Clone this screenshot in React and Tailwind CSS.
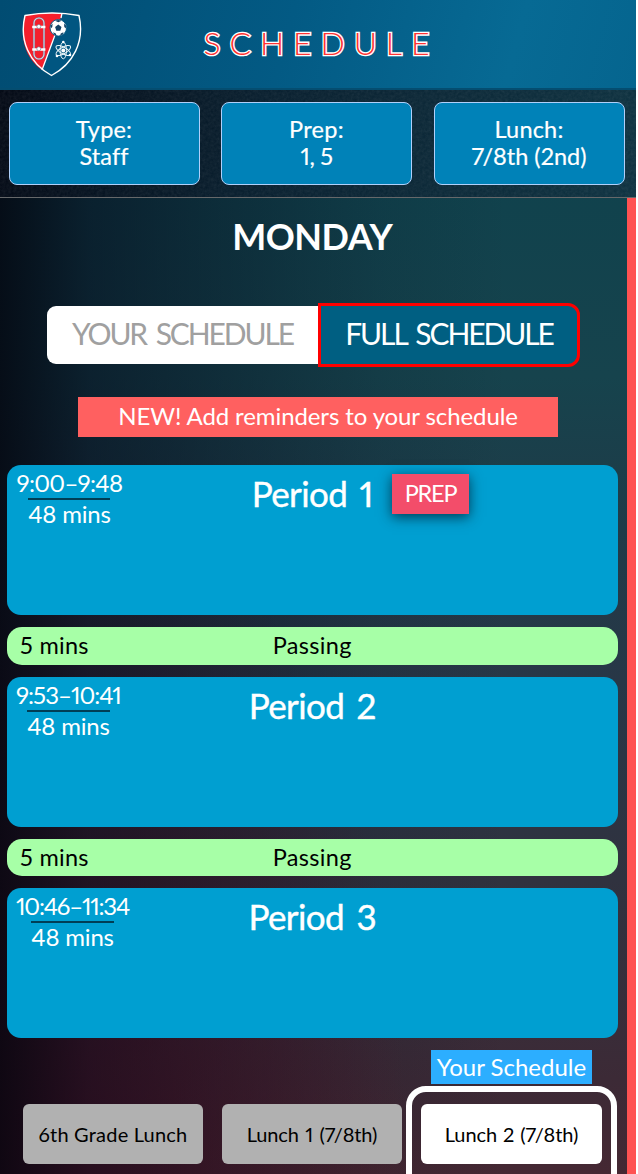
import React from "react";

function Crest() {
  return (
    <svg viewBox="0 0 64 68" className="h-[68px] w-16" fill="none">
      <path d="M5 5.500Q32 .5 59 5.500C65 32 53 54 31.500 65.500C9 53 -1 30 5 5.500Z" fill="#015681" />
      <path d="M5 5.500Q22 2.500 42 3.200L40 10L22 60C6 49 -1 29 5 5.500Z" fill="#f51f2c" />
      <path d="M42 3.200L41 8M35 25L22 60" stroke="#fff" strokeWidth="1.300" />
      <path d="M5 5.500Q32 .5 59 5.500C65 32 53 54 31.500 65.500C9 53 -1 30 5 5.500Z" stroke="#fff" strokeWidth="1.400" />
      <rect x="14" y="8" width="10" height="41" rx="5" stroke="#8a5c78" strokeWidth="2.200" />
      <rect x="14" y="8" width="10" height="41" rx="5" stroke="#d4dce8" strokeWidth="1.100" />
      <path d="M12.200 17h13.200M12.200 39.500h13.200" stroke="#fff" strokeWidth="2.300" />
      <circle cx="18.800" cy="16.500" r="2" fill="#fff" stroke="#60708c" strokeWidth=".6" />
      <circle cx="18.800" cy="38.800" r="2" fill="#fff" stroke="#60708c" strokeWidth=".6" />
      <circle cx="38.300" cy="17.800" r="8.300" fill="#fff" stroke="#015681" strokeWidth=".9" />
      <path d="M38.300 14.500l3.200 2.400-1.200 3.800h-4l-1.200-3.800ZM35 10.700l3.300 1.500 3.300-1.500-3.300-.8ZM44 13.500l.3 3.500 1.600 1.500.1-3ZM43.500 22.300l-2.700 1.300-.7 1.800 2.500-.9ZM33.100 22.300l2.700 1.300.7 1.800-2.500-.9ZM32.600 13.500l-.3 3.500-1.600 1.500v-3Z" fill="#124367" />
      <g stroke="#e7f3f7" strokeWidth="1">
        <ellipse cx="43.300" cy="40.500" rx="3.200" ry="8.300" />
        <ellipse cx="43.300" cy="40.500" rx="3.200" ry="8.300" transform="rotate(60 43.300 40.500)" />
        <ellipse cx="43.300" cy="40.500" rx="3.200" ry="8.300" transform="rotate(120 43.300 40.500)" />
      </g>
      <g fill="#fff"><circle cx="43.300" cy="40.500" r="2" /><circle cx="43.300" cy="32" r="1.300" /><circle cx="37" cy="46" r="1.300" /><circle cx="50" cy="45" r="1.300" /></g>
    </svg>
  );
}

function Grain() {
  return (
    <svg className="pointer-events-none absolute inset-0 h-full w-full opacity-10">
      <filter id="grain"><feTurbulence type="fractalNoise" baseFrequency="0.350" numOctaves="3" /><feColorMatrix type="saturate" values="0" /></filter>
      <rect width="100%" height="100%" filter="url(#grain)" />
    </svg>
  );
}

function Setting({ label, value, labelClass, valueClass }) {
  return (
    <button className="relative flex h-[83px] w-[191px] flex-col items-center justify-center rounded-lg border border-[#b0d0fa] bg-[#0082b8] pb-[2px] text-[23.500px] leading-[27px] text-white [-webkit-text-stroke:0.200px_white]">
      <span className={labelClass}>{label}</span>
      <span className={valueClass}>{value}</span>
    </button>
  );
}

function Period({ time, name, timeClass, detailClass, ruleClass, prep }) {
  return (
    <section className="relative flex h-[150px] justify-center rounded-[14px] bg-[#009fd1] text-white">
      <div className={"absolute top-1 flex flex-col items-center text-2xl leading-[27px] whitespace-nowrap " + detailClass}>
        <span className={timeClass}>{time}</span>
        <span className={"mt-[2px] h-[2px] bg-[#003e55] " + ruleClass} />
        <span className="tracking-[-0.200px]">48 mins</span>
      </div>
      <h2 className="mt-2 h-10 whitespace-nowrap text-[35px] leading-10 tracking-[-0.600px] [word-spacing:4px] [-webkit-text-stroke:0.400px_white]">{name}</h2>
      {prep && (
        <span className="absolute left-[385px] top-[9px] flex h-10 w-[77px] items-center justify-center bg-[#f34d6a] text-[23.500px] tracking-[-1.200px] shadow-[0_3px_12px_rgba(0,25,40,0.75)]">PREP</span>
      )}
    </section>
  );
}

function Passing() {
  return (
    <div className="relative my-3 flex h-[37.500px] items-center justify-center rounded-[15px] bg-[#a7ffa7] text-[23.500px] text-black">
      <span className="absolute left-[13px] tracking-[0.300px]">5 mins</span>
      <span className="tracking-[0.300px]">Passing</span>
    </div>
  );
}

export default function App() {
  return (
    <div className="h-[1174px] w-[638px] overflow-hidden bg-white font-['Lato',sans-serif] proportional-nums">
      <div className="flex h-full w-[636px] flex-col bg-[linear-gradient(90deg,rgba(3,4,14,0.85)_0%,rgba(5,10,26,0.6)_14%,rgba(6,12,28,0.38)_36%,rgba(6,12,28,0.12)_60%,rgba(6,10,24,0)_80%),radial-gradient(ellipse_at_12%_100%,#5e1527_0%,transparent_42%),linear-gradient(180deg,#10424d_15%,#16434d_32%,#1f3b48_45%,#283747_58%,#30323f_75%,#3c2a36_92%,#452833_100%)]">
        <header className="relative flex h-[90px] shrink-0 items-center justify-center border-b-2 border-[#044d70] bg-[linear-gradient(105deg,#014c72_0%,#035a84_45%,#076a94_80%,#05658f_100%)]">
          <div className="absolute left-5 top-[10px]"><Crest /></div>
          <h1 className="mr-[3px] mb-[2px] flex w-[226px] justify-between text-[32px] font-light text-[#f33] [paint-order:stroke_fill] [-webkit-text-stroke:2.700px_white]">
            {"SCHEDULE".split("").map((letter, i) => <span key={i}>{letter}</span>)}
          </h1>
        </header>
        <div className="relative flex h-[108px] shrink-0 gap-[21.500px] border-b border-[#66686a] bg-[linear-gradient(100deg,#010713_0%,#061d2d_40%,#0c3140_100%)] px-[8.500px] pt-3">
          <Grain />
          <Setting label="Type:" value="Staff" labelClass="tracking-[0.200px]" valueClass="tracking-[0.100px]" />
          <Setting label="Prep:" value="1, 5" labelClass="tracking-[0.300px]" valueClass="tracking-[-0.300px]" />
          <Setting label="Lunch:" value="7/8th (2nd)" labelClass="tracking-[0.200px]" valueClass="" />
        </div>
        <main className="flex min-h-0 grow border-r-[9px] border-[#ff5252]">
          <div className="ml-[7px] flex w-[610.500px] flex-col">
            <h2 className="mt-[15px] h-[47px] text-center text-[36px] leading-[46px] font-bold tracking-[-0.500px] text-white">MONDAY</h2>
            <div className="ml-10 mt-[43px] flex h-[64px] w-[533px] items-center text-[30px]">
              <button className="flex h-[58px] w-[271px] items-center justify-center rounded-l-[9px] bg-white pb-[3px] tracking-[-2.100px] [word-spacing:4px] whitespace-nowrap text-[#a0a0a0]">YOUR SCHEDULE</button>
              <button className="flex h-16 grow items-center justify-center rounded-r-xl border-3 border-[#f00] bg-[#005f82] pb-[3px] tracking-[-2.100px] [word-spacing:4px] whitespace-nowrap text-white">FULL SCHEDULE</button>
            </div>
            <div className="ml-[71px] mt-[30px] mb-[28px] flex h-10 w-[480px] shrink-0 items-center justify-center bg-[#ff6060] pb-[2px] text-[24px] tracking-[-0.100px] whitespace-nowrap text-white">NEW! Add reminders to your schedule</div>
            <Period time="9:00–9:48" name="Period 1" timeClass="tracking-[-0.700px]" detailClass="left-[9.500px]" ruleClass="w-[82px]" prep />
            <Passing />
            <Period time="9:53–10:41" name="Period 2" timeClass="tracking-[-1px]" detailClass="left-[9px]" ruleClass="w-[83px]" />
            <Passing />
            <Period time="10:46–11:34" name="Period 3" timeClass="tracking-[-1.200px]" detailClass="left-[9px]" ruleClass="w-[83px]" />
            <div className="flex h-[136px] items-start text-[20px] text-black">
              <button className="ml-4 mt-[66px] h-[60px] w-[180px] shrink-0 rounded-md bg-[#b1b1b1] tracking-[0.200px] whitespace-nowrap">6th Grade Lunch</button>
              <button className="ml-[19px] mt-[66px] h-[60px] w-[180px] shrink-0 rounded-md bg-[#b1b1b1] tracking-[-0.150px] [word-spacing:1.500px] whitespace-nowrap">Lunch 1 (7/8th)</button>
              <div className="ml-1 flex w-[211px] shrink-0 flex-col items-center">
                <span className="mt-3 flex h-[34px] w-[161px] items-center justify-center bg-[#2caeff] text-[24px] whitespace-nowrap text-white">Your Schedule</span>
                <div className="mt-[2px] h-[108px] w-[211px] shrink-0 rounded-[20px] border-[6px] border-white px-[9px] pt-3">
                  <button className="h-[60px] w-[181px] rounded-md bg-white tracking-[-0.100px] [word-spacing:1px] whitespace-nowrap">Lunch 2 (7/8th)</button>
                </div>
              </div>
            </div>
          </div>
        </main>
      </div>
    </div>
  );
}
